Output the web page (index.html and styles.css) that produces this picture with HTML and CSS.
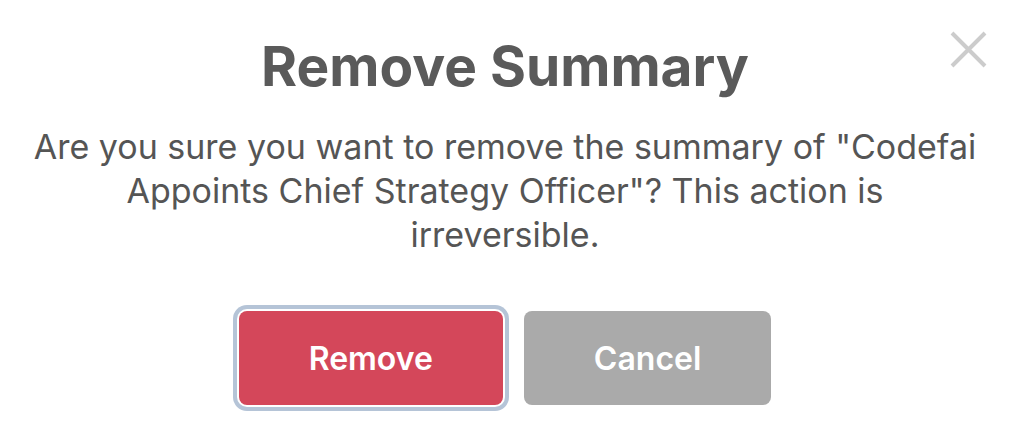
FILE: index.html
```html
<!DOCTYPE html>
<html>
<head>
<meta charset="utf-8">
<link rel="stylesheet" href="styles.css">
</head>
<body>
<div class="dialog">
  <button class="close" aria-label="Close">
    <svg width="37" height="37" viewBox="0 0 37 37"><path d="M2 2 L35 35 M35 2 L2 35" stroke="#cccccc" stroke-width="4" fill="none"/></svg>
  </button>
  <h1 class="title">Remove Summary</h1>
  <p class="message">Are you sure you want to remove the summary of "Codefai Appoints Chief Strategy Officer"? This action is irreversible.</p>
  <div class="actions">
    <button class="btn btn-remove">Remove</button>
    <button class="btn btn-cancel">Cancel</button>
  </div>
</div>
</body>
</html>
```
FILE: styles.css
```css
html, body {
  margin: 0;
  padding: 0;
  background: #ffffff;
}
body {
  font-family: Inter, "Open Sans", sans-serif;
  color: #555555;
}
.dialog {
  position: relative;
  width: 1010px;
  height: 442px;
  box-sizing: border-box;
  padding: 33px 20px 0;
  display: flex;
  flex-direction: column;
  align-items: center;
}
.close {
  position: absolute;
  top: 31px;
  right: 23px;
  width: 37px;
  height: 37px;
  padding: 0;
  border: 0;
  background: none;
  display: block;
}
.close svg { display: block; }
.title {
  margin: 0;
  font-size: 55px;
  font-weight: 700;
  line-height: 66px;
  color: #5a5a5a;
}
.message {
  margin: 26px 0 0;
  max-width: 946px;
  font-size: 34px;
  font-weight: 400;
  line-height: 44px;
  text-align: center;
  color: #555555;
}
.actions {
  margin-top: 54px;
  display: flex;
  gap: 21px;
}
.btn {
  font-family: Inter, "Open Sans", sans-serif;
  font-size: 32px;
  font-weight: 600;
  color: #ffffff;
  border: 0;
  border-radius: 8px;
  height: 94px;
  padding: 0 70px;
}
.btn-remove {
  background: #d4475a;
  box-shadow: 0 0 0 2px #ffffff, 0 0 0 6px #b5c4d7;
}
.btn-cancel {
  background: #aaaaaa;
}
```
